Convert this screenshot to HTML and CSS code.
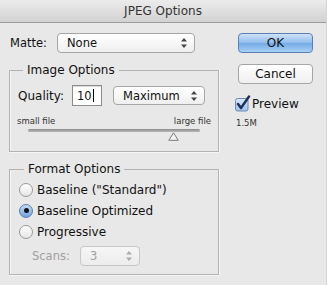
FILE: index.html
```html
<!DOCTYPE html>
<html lang="en">
<head>
    <meta charset="UTF-8">
    <title>JPEG Options</title>
    <link rel="stylesheet" href="styles.css">
</head>
<body>
    <div class="dialog">
        <div class="titlebar">JPEG Options</div>
        <div class="content">
            <div class="left">
                <div class="matte-row">
                    <span class="matte-label">Matte:</span>
                    <div class="select matte-select">
                        <span>None</span>
                        <svg class="arrows" width="6" height="10" viewBox="0 0 6 10"><path d="M3 0 L6 3.5 L0 3.5 Z M3 10 L6 6.5 L0 6.5 Z" fill="#444"/></svg>
                    </div>
                </div>

                <fieldset class="group image-group">
                    <legend>Image Options</legend>
                    <div class="quality-row">
                        <span class="quality-label">Quality:</span>
                        <div class="text-input">10<span class="caret"></span></div>
                        <div class="select quality-select">
                            <span>Maximum</span>
                            <svg class="arrows" width="6" height="10" viewBox="0 0 6 10"><path d="M3 0 L6 3.5 L0 3.5 Z M3 10 L6 6.5 L0 6.5 Z" fill="#444"/></svg>
                        </div>
                    </div>
                    <div class="size-row">
                        <span>small file</span>
                        <span>large file</span>
                    </div>
                    <div class="slider">
                        <div class="track"></div>
                        <svg class="thumb" width="11" height="9" viewBox="0 0 11 9"><path d="M5.5 0.8 L10.2 8.3 L0.8 8.3 Z" fill="#f6f6f6" stroke="#7a7a7a" stroke-width="1"/></svg>
                    </div>
                </fieldset>

                <fieldset class="group format-group">
                    <legend>Format Options</legend>
                    <div class="radio-row"><span class="radio"></span>Baseline ("Standard")</div>
                    <div class="radio-row"><span class="radio checked"></span>Baseline Optimized</div>
                    <div class="radio-row"><span class="radio"></span>Progressive</div>
                    <div class="scans-row">
                        <span class="scans-label">Scans:</span>
                        <div class="select scans-select">
                            <span>3</span>
                            <svg class="arrows" width="6" height="10" viewBox="0 0 6 10"><path d="M3 0 L6 3.5 L0 3.5 Z M3 10 L6 6.5 L0 6.5 Z" fill="#aaa"/></svg>
                        </div>
                    </div>
                </fieldset>
            </div>

            <div class="right">
                <button class="btn ok">OK</button>
                <button class="btn cancel">Cancel</button>
                <div class="preview-row">
                    <svg width="17" height="17" viewBox="0 0 17 17">
                        <defs>
                            <linearGradient id="cb" x1="0" y1="0" x2="0" y2="1">
                                <stop offset="0" stop-color="#dbe9f8"/>
                                <stop offset="1" stop-color="#9dc0e8"/>
                            </linearGradient>
                        </defs>
                        <rect x="1.5" y="3.5" width="12.5" height="12.5" rx="2" fill="url(#cb)" stroke="#6d8cb8"/>
                        <path d="M4 9 L7 13 L15 1.5" fill="none" stroke="#1c2f5c" stroke-width="2.4" stroke-linecap="round" stroke-linejoin="round"/>
                    </svg>
                    <span>Preview</span>
                </div>
                <div class="file-size">1.5M</div>
            </div>
        </div>
    </div>
</body>
</html>
```

FILE: styles.css
```css
body {
    margin: 0;
    padding: 0;
    background-color: #e8e8e8;
}

.dialog {
    width: 327px;
    height: 285px;
    overflow: hidden;
    box-sizing: border-box;
    border-right: 1px solid #d4d4d4;
    background-color: #e8e8e8;
    font-family: "DejaVu Sans", sans-serif;
    font-size: 11.5px;
    color: #111;
}

.titlebar {
    height: 23px;
    box-sizing: border-box;
    line-height: 22px;
    text-align: center;
    font-size: 12px;
    color: #333;
    background: linear-gradient(#ececec, #d2d2d2);
    border-bottom: 1px solid #9c9c9c;
}

.content {
    display: flex;
    padding: 10px 0 0 9px;
}

.left {
    width: 210px;
}

.matte-row {
    display: flex;
    align-items: center;
    height: 20px;
}

.matte-label {
    width: 47px;
    padding-left: 1px;
}

.select {
    display: flex;
    align-items: center;
    justify-content: space-between;
    box-sizing: border-box;
    height: 20px;
    padding: 0 7px 0 9px;
    background: linear-gradient(#ffffff, #efefef);
    border: 1px solid #a6a6a6;
    border-radius: 4px;
}

.matte-select {
    width: 138px;
}

.group {
    margin: 10px 0 0 0;
    padding: 8px 7px 11px 8px;
    border: 1px solid #b3b3b3;
    box-shadow: inset 1px 0 0 #f6f6f6, 0 1px 0 #f6f6f6, 1px 0 0 #f6f6f6;
    width: 210px;
    box-sizing: border-box;
}

.group legend {
    margin-left: 5px;
    padding: 0 4px;
    line-height: 14px;
    font-size: 12px;
}

.quality-row {
    display: flex;
    align-items: center;
    height: 21px;
}

.quality-label {
    width: 54px;
    font-size: 12px;
}

.text-input {
    display: flex;
    align-items: center;
    box-sizing: border-box;
    width: 30px;
    height: 21px;
    padding-left: 4px;
    background: #fff;
    border: 1px solid #8c8c8c;
    box-shadow: inset 0 1px 1px rgba(0, 0, 0, 0.15);
}

.caret {
    display: inline-block;
    width: 1px;
    height: 13px;
    background: #000;
    margin-left: 1px;
}

.quality-select {
    width: 92px;
    margin-left: 11px;
    height: 19px;
}

.size-row {
    display: flex;
    justify-content: space-between;
    margin-top: 10px;
    height: 10px;
    line-height: 10px;
    font-size: 8.5px;
    color: #333;
}

.size-row span:first-child {
    margin-left: -1px;
}

.slider {
    position: relative;
    margin: 3px 0 0 10px;
    width: 172px;
    height: 11px;
}

.track {
    height: 3px;
    margin-top: 1px;
    background: linear-gradient(#8c8c8c, #b9b9b9);
    border-radius: 2px;
}

.thumb {
    position: absolute;
    left: 140px;
    top: 3px;
}

.format-group {
    padding-top: 3px;
    padding-left: 9px;
    padding-bottom: 8px;
}

.radio-row {
    display: flex;
    align-items: center;
    height: 21px;
    font-size: 12px;
}

.radio {
    box-sizing: border-box;
    width: 14px;
    height: 14px;
    margin-right: 4px;
    border-radius: 50%;
    border: 1px solid #9a9a9a;
    background: linear-gradient(#ffffff, #e6e6e6);
    display: flex;
    align-items: center;
    justify-content: center;
}

.radio.checked {
    border-color: #5b7db5;
    background: linear-gradient(#c6dcf5, #6fa2df);
}

.radio.checked::after {
    content: "";
    width: 5px;
    height: 5px;
    border-radius: 50%;
    background: #111;
}

.scans-row {
    display: flex;
    align-items: center;
    margin-top: 4px;
    padding-left: 13px;
    height: 20px;
    color: #a0a0a0;
}

.scans-label {
    width: 48px;
}

.scans-select {
    width: 60px;
    border-color: #c6c6c6;
    background: linear-gradient(#f6f6f6, #ececec);
    color: #a0a0a0;
}

.right {
    display: flex;
    flex-direction: column;
    margin-left: 19px;
    width: 75px;
}

.btn {
    box-sizing: border-box;
    width: 75px;
    height: 20px;
    padding: 0;
    font-family: "DejaVu Sans", sans-serif;
    font-size: 12px;
    color: #111;
    border-radius: 4px;
}

.ok {
    background: linear-gradient(#cfe2f8, #8fbcec 50%, #74aae6 51%, #a7d0f5);
    border: 1px solid #5c7fb3;
}

.cancel {
    margin-top: 11px;
    background: linear-gradient(#ffffff, #efefef);
    border: 1px solid #a6a6a6;
}

.preview-row {
    display: flex;
    align-items: center;
    margin: 11px 0 0 -4px;
    height: 17px;
    font-size: 12px;
}

.preview-row span {
    margin-left: 1px;
}

.file-size {
    margin-top: 6px;
    margin-left: -2px;
    font-size: 8.5px;
    color: #333;
}
```
